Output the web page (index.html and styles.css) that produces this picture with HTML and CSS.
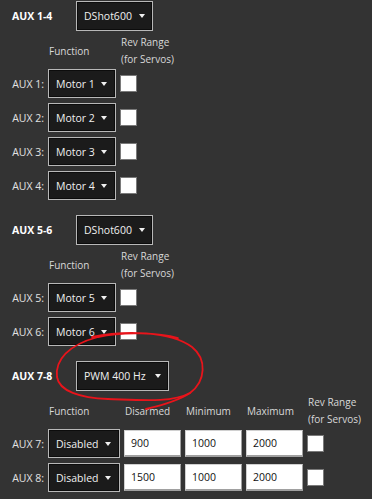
FILE: index.html
```html
<!DOCTYPE html>
<html lang="en">
<head>
    <meta charset="UTF-8">
    <meta name="viewport" content="width=device-width, initial-scale=1.0">
    <title>Motor Outputs</title>
    <link rel="stylesheet" href="styles.css">
</head>
<body>

<div class="page">

    <!-- AUX 1-4 -->
    <section class="group">
        <div class="group-head">
            <span class="group-name">AUX 1-4</span>
            <div class="select protocol"><span>DShot600</span></div>
        </div>
        <div class="row servo head">
            <span></span>
            <span class="col-head">Function</span>
            <span class="col-head">Rev Range<br>(for Servos)</span>
        </div>
        <div class="row servo">
            <span class="aux">AUX 1:</span>
            <div class="select"><span>Motor 1</span></div>
            <span class="check"></span>
        </div>
        <div class="row servo">
            <span class="aux">AUX 2:</span>
            <div class="select"><span>Motor 2</span></div>
            <span class="check"></span>
        </div>
        <div class="row servo">
            <span class="aux">AUX 3:</span>
            <div class="select"><span>Motor 3</span></div>
            <span class="check"></span>
        </div>
        <div class="row servo">
            <span class="aux">AUX 4:</span>
            <div class="select"><span>Motor 4</span></div>
            <span class="check"></span>
        </div>
    </section>

    <!-- AUX 5-6 -->
    <section class="group">
        <div class="group-head">
            <span class="group-name">AUX 5-6</span>
            <div class="select protocol"><span>DShot600</span></div>
        </div>
        <div class="row servo head">
            <span></span>
            <span class="col-head">Function</span>
            <span class="col-head">Rev Range<br>(for Servos)</span>
        </div>
        <div class="row servo">
            <span class="aux">AUX 5:</span>
            <div class="select"><span>Motor 5</span></div>
            <span class="check"></span>
        </div>
        <div class="row servo">
            <span class="aux">AUX 6:</span>
            <div class="select"><span>Motor 6</span></div>
            <span class="check"></span>
        </div>
    </section>

    <!-- AUX 7-8 -->
    <section class="group">
        <div class="group-head">
            <span class="group-name">AUX 7-8</span>
            <div class="select protocol pwm"><span>PWM 400 Hz</span></div>
        </div>
        <div class="row pwm-row head">
            <span></span>
            <span class="col-head">Function</span>
            <span class="col-head">Disarmed</span>
            <span class="col-head">Minimum</span>
            <span class="col-head">Maximum</span>
            <span class="col-head">Rev Range<br>(for Servos)</span>
        </div>
        <div class="row pwm-row">
            <span class="aux">AUX 7:</span>
            <div class="select"><span>Disabled</span></div>
            <input class="num" type="text" value="900">
            <input class="num" type="text" value="1000">
            <input class="num" type="text" value="2000">
            <span class="check"></span>
        </div>
        <div class="row pwm-row">
            <span class="aux">AUX 8:</span>
            <div class="select"><span>Disabled</span></div>
            <input class="num" type="text" value="1500">
            <input class="num" type="text" value="1000">
            <input class="num" type="text" value="2000">
            <span class="check"></span>
        </div>
    </section>

    <!-- hand drawn marker round the PWM rate -->
    <svg class="mark" width="372" height="499" viewBox="0 0 372 499">
        <path d="M 92 337 C 125 330, 170 331, 192 347 C 207 359, 206 381, 190 393 C 172 403, 140 400, 108 399 C 80 398, 59 391, 57 377 C 55 360, 68 345, 98 337 C 125 331, 160 333, 178 338"
              fill="none" stroke="#e8141b" stroke-width="1.8" stroke-linecap="round"/>
        <path d="M 190 393 C 178 401, 163 405, 146 409"
              fill="none" stroke="#e8141b" stroke-width="1.8" stroke-linecap="round"/>
    </svg>

</div>

</body>
</html>
```

FILE: styles.css
```css
body {
    margin: 0;
    padding: 0;
    background-color: #333333;
    font-family: "Open Sans", Arial, sans-serif;
    font-size: 10.5px;
    color: #e2e2e2;
}

.page {
    position: relative;
    width: 372px;
    height: 499px;
    padding: 1px 0 0 12px;
    box-sizing: border-box;
    overflow: hidden;
}

.group {
    margin-bottom: 15px;
}

.group-head {
    display: flex;
    align-items: center;
    height: 30px;
}

.group-name {
    width: 64px;
    font-weight: bold;
    color: #ffffff;
}

.row {
    display: grid;
    column-gap: 4px;
    align-items: center;
    height: 29px;
    margin-top: 5px;
}

.row.head {
    height: 34px;
    margin-top: 3px;
    margin-bottom: -4px;
}

.servo {
    grid-template-columns: 32px 68px 17px;
}

.pwm-row {
    grid-template-columns: 32px 72px 57px 57px 57px 18px;
}

.col-head {
    font-size: 10px;
    line-height: 17px;
    color: #d8d8d8;
    white-space: nowrap;
    padding-left: 1px;
}

.aux {
    text-align: right;
    white-space: nowrap;
}

/* Dark dropdowns */
.select {
    box-sizing: border-box;
    height: 29px;
    display: flex;
    align-items: center;
    justify-content: space-between;
    padding: 0 8px 0 7px;
    background-color: #1b1b1b;
    border: 1px solid #b8b8b8;
    box-shadow: inset 0 0 0 1px #0c0c0c;
    color: #f0f0f0;
    white-space: nowrap;
}

.select::after {
    content: "";
    border-left: 3.5px solid transparent;
    border-right: 3.5px solid transparent;
    border-top: 4px solid #f0f0f0;
}

.protocol {
    width: 77px;
    height: 30px;
    padding-right: 7px;
}

.protocol.pwm {
    width: 93px;
}

.num {
    box-sizing: border-box;
    width: 57px;
    height: 27px;
    margin: 0;
    padding: 0 0 0 6px;
    font-family: "Open Sans", Arial, sans-serif;
    font-size: 10.5px;
    color: #111;
    background-color: #ffffff;
    border: 1px solid #d0d0d0;
    border-right-color: #a0a0a0;
    border-bottom: 2px solid #a0a0a0;
    outline: none;
}

.check {
    box-sizing: border-box;
    width: 17px;
    height: 17px;
    background-color: #ffffff;
    border: 1px solid #7a7a7a;
}

.mark {
    position: absolute;
    left: 0;
    top: 0;
    pointer-events: none;
}
```
